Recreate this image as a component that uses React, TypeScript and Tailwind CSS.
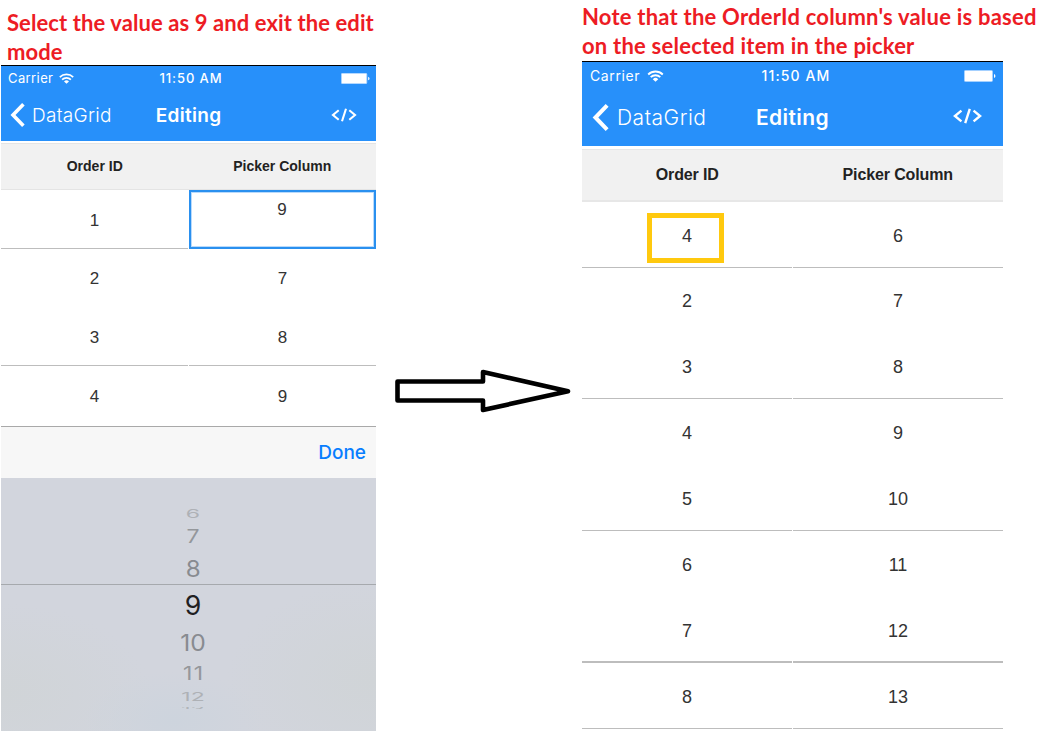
import React from "react";

const HELV = "font-['Liberation_Sans',Arial,sans-serif]";
const SANS = "font-[Inter,Roboto,sans-serif]";

function Wifi({ className }: { className: string }) {
  return (
    <svg viewBox="0 0 15 11" className={className} fill="none" stroke="white" strokeWidth="1.7">
      <path d="M0.8 4.1a9.7 9.7 0 0 1 13.4 0" />
      <path d="M3.1 6.6a6.3 6.3 0 0 1 8.800 0" />
      <path d="M7.5 10.8 5 8.4a3.6 3.6 0 0 1 5 0z" fill="white" stroke="none" />
    </svg>
  );
}

function Battery({ className }: { className: string }) {
  return (
    <svg viewBox="0 0 29 12" className={className} preserveAspectRatio="none">
      <rect x="0.4" y="0.4" width="25.4" height="11.2" rx="1" fill="white" stroke="#a9d3ff" strokeWidth="0.8" />
      <path d="M27.2 4v4q1.3-.5 1.3-2t-1.3-2z" fill="white" />
    </svg>
  );
}

function Back({ className }: { className: string }) {
  return (
    <svg viewBox="0 0 15 24" className={className} fill="none" stroke="white" strokeWidth="3.6">
      <path d="M13.400 1.3 3 12l10.400 10.7" />
    </svg>
  );
}

function Code({ className }: { className: string }) {
  return (
    <svg viewBox="0 0 27 14" className={className} fill="none" stroke="white" strokeWidth="2.1">
      <path d="M8.200 2.300 2.500 7l5.700 4.700M18.800 2.300 24.500 7l-5.700 4.700M15.500.8l-4 12.400" />
    </svg>
  );
}

function Cell({ value, line }: { value: string; line: string }) {
  return <div className={`flex h-full items-center justify-center ${line}`}>{value}</div>;
}

const leftRows = [
  { id: "2", value: "7", h: "h-[58px]", line: "pt-[2px]" },
  { id: "3", value: "8", h: "h-[59px]", line: "pt-[4px] border-b border-[#bdbdbd]" },
];

const rightRows = [
  { id: "2", value: "7", h: "h-[65px]", line: "pt-[2px]" },
  { id: "3", value: "8", h: "h-[66px]", line: "pt-[3px] border-b border-[#bdbdbd]" },
  { id: "4", value: "9", h: "h-[66px]", line: "pt-[2px]" },
  { id: "5", value: "10", h: "h-[66px]", line: "pt-[3px] border-b border-[#bdbdbd]" },
  { id: "6", value: "11", h: "h-[66px]", line: "pt-[2px]" },
  { id: "7", value: "12", h: "h-[66px]", line: "pt-[4px] border-b-2 border-[#bdbdbd]" },
  { id: "8", value: "13", h: "h-[66px]", line: "pt-[3px] border-b border-[#bdbdbd]" },
];

const wheel = [
  { n: "6", h: "h-[16px]", c: "text-[#aeb1b6]", s: "scale-y-[0.48]" },
  { n: "7", h: "h-[31px]", c: "text-[#94979b]", s: "scale-y-[0.8]" },
  { n: "8", h: "h-[32px]", c: "text-[#888b90]", s: "scale-x-[1.05]" },
  { n: "9", h: "h-[42px]", c: "text-[#1f2022]", s: "scale-[1.16]" },
  { n: "10", h: "h-[32px]", c: "text-[#888b90]", s: "scale-x-[1.07]" },
  { n: "11", h: "h-[31px]", c: "text-[#94979b]", s: "tracking-[1.5px] pl-[1.5px] scale-y-[0.8]" },
  { n: "12", h: "h-[14px]", c: "text-[#aeb1b6]", s: "scale-y-[0.48]" },
];

function LeftPhone() {
  return (
    <section className="flex h-[666px] w-[375px] flex-col border-t border-black">
      <header className={`h-[75px] bg-[#2790fa] text-white ${SANS}`}>
        <div className="grid h-[24px] grid-cols-3 items-center px-[7px] text-[13px] leading-none">
          <div className="flex items-center gap-[6px]">
            <span className="tracking-[0.4px]">Carrier</span>
            <Wifi className="h-[11px] w-[15px]" />
          </div>
          <span className="pl-[5px] text-center font-medium tracking-[0.9px] whitespace-nowrap">11:50 AM</span>
          <Battery className="-mr-[1px] h-[11px] w-[29px] justify-self-end" />
        </div>
        <div className="grid h-[50px] grid-cols-3 items-center text-[19px] leading-none">
          <div className="flex items-center gap-[7px] pl-[9px]">
            <Back className="h-[24px] w-[15px] shrink-0" />
            <span className="font-light tracking-[0.3px]">DataGrid</span>
          </div>
          <span className="text-center font-semibold tracking-[0.3px]">Editing</span>
          <Code className="mr-[18px] h-[14px] w-[28px] justify-self-end" />
        </div>
      </header>
      <div className={`mt-[2px] grid h-[47px] shrink-0 grid-cols-2 items-center border-y border-[#e4e4e4] bg-[#f1f1f1] text-center text-[14px] font-bold text-[#222] ${HELV}`}>
        <span>Order ID</span>
        <span>Picker Column</span>
      </div>
      <div className={`text-[17px] text-[#333] ${HELV}`}>
        <div className="grid h-[59px] grid-cols-[187px_187px] gap-x-px">
          <Cell value="1" line="pt-[3px] border-b border-[#bdbdbd]" />
          <div className="flex justify-center border-2 border-[#2a90ef] pt-[5px] pr-px shadow-[inset_0_0_0_1px_#b9dafb]">9</div>
        </div>
        {leftRows.map((r) => (
          <div key={r.id} className={`grid grid-cols-[187px_187px] gap-x-px pr-px ${r.h}`}>
            <Cell value={r.id} line={r.line} />
            <Cell value={r.value} line={r.line} />
          </div>
        ))}
        <div className="grid h-[61px] grid-cols-[187px_187px] gap-x-px border-b border-[#a9a9a9]">
          <Cell value="4" line="pt-px" />
          <Cell value="9" line="pt-px" />
        </div>
      </div>
      <div className={`flex h-[51px] items-center justify-end bg-[#f7f7f7] pt-[2px] pr-[10px] text-[19px] font-medium text-[#087eff] ${SANS}`}>
        Done
      </div>
      <div className="relative h-[253px] overflow-hidden bg-[radial-gradient(ellipse_90px_50px_at_46%_96%,#cdd4dd,transparent),radial-gradient(ellipse_150px_90px_at_0%_85%,#d0d4d7,transparent),radial-gradient(ellipse_150px_100px_at_100%_80%,#d0d4d7,transparent)] bg-[#d2d5dd]">
        <div className={`flex flex-col pt-[28px] pl-[9px] text-[23px] leading-none ${SANS}`}>
          {wheel.map((w) => (
            <div key={w.n} className={`flex items-center justify-center ${w.h} ${w.c}`}>
              <span className={w.s}>{w.n}</span>
            </div>
          ))}
          <div className="mt-[3px] flex h-[2px] justify-center overflow-hidden text-[#b0b4b9]">
            <span className="-mt-[1px] origin-top scale-y-[0.3]">13</span>
          </div>
        </div>
        <div className="absolute top-[106px] h-px w-full bg-[#a6a9ad]" />
      </div>
    </section>
  );
}

function RightPhone() {
  return (
    <section className="flex h-[670px] w-[421px] flex-col border-t border-black">
      <header className={`h-[84px] shrink-0 bg-[#2790fa] text-white ${SANS}`}>
        <div className="grid h-[27px] grid-cols-3 items-center pr-[8px] pl-[8px] text-[14px] leading-none">
          <div className="flex items-center gap-[7px]">
            <span className="tracking-[0.6px]">Carrier</span>
            <Wifi className="h-[12px] w-[17px]" />
          </div>
          <span className="pl-[7px] text-center font-medium tracking-[1.1px] whitespace-nowrap">11:50 AM</span>
          <Battery className="-mr-[1px] h-[12px] w-[32px] justify-self-end" />
        </div>
        <div className="grid h-[57px] grid-cols-3 items-center text-[21px] leading-none">
          <div className="flex items-center gap-[8px] pl-[10px]">
            <Back className="h-[27px] w-[17px] shrink-0" />
            <span className="font-light tracking-[0.5px]">DataGrid</span>
          </div>
          <span className="text-center font-semibold tracking-[0.4px]">Editing</span>
          <Code className="mr-[20px] mb-[3px] h-[16px] w-[31px] justify-self-end" />
        </div>
      </header>
      <div className={`mt-[3px] grid h-[53px] shrink-0 grid-cols-2 items-center border-t border-b-2 border-[#e7e7e7] bg-[#f1f1f1] text-center text-[16px] font-bold tracking-[-0.12px] text-[#222] ${HELV}`}>
        <span>Order ID</span>
        <span>Picker Column</span>
      </div>
      <div className={`text-[18px] text-[#333] ${HELV}`}>
        <div className="grid h-[66px] grid-cols-[210px_210px] gap-x-px">
          <div className="flex items-center justify-center border-b border-[#bdbdbd]">
            <div className="mt-[6px] -ml-[3px] flex h-[50px] w-[77px] items-center justify-center border-[5px] border-[#ffc90e] pb-[2px] pl-[3px]">4</div>
          </div>
          <Cell value="6" line="border-b border-[#bdbdbd] pt-[3px]" />
        </div>
        {rightRows.map((r) => (
          <div key={r.id} className={`grid grid-cols-[210px_210px] gap-x-px ${r.h}`}>
            <Cell value={r.id} line={r.line} />
            <Cell value={r.value} line={r.line} />
          </div>
        ))}
      </div>
    </section>
  );
}

export default function App() {
  return (
    <main className="flex h-[731px] w-[1043px] overflow-hidden bg-white">
      <div className="flex w-[394px] shrink-0 flex-col pl-[1px]">
        <h2 className="h-[65px] shrink-0 pt-[8px] pl-[6px] font-[Lato,sans-serif] text-[22px] leading-[29px] font-bold tracking-[0.09px] whitespace-nowrap text-[#ed1c24]">
          Select the value as 9 and exit the edit
          <br />
          mode
        </h2>
        <LeftPhone />
      </div>
      <div className="w-[188px] shrink-0 pt-[360px]">
        <svg viewBox="394 360 188 60" className="h-[60px] w-[188px]" fill="none" stroke="black" strokeWidth="4.6" strokeLinejoin="round">
          <path d="M397.5 381.5H483V372l85 19.2L483 410V400.500H397.500Z" />
        </svg>
      </div>
      <div className="flex w-[461px] shrink-0 flex-col">
        <h2 className="h-[61px] shrink-0 pt-[2px] font-[Lato,sans-serif] text-[22px] leading-[29px] font-bold tracking-[0.22px] whitespace-nowrap text-[#ed1c24]">
          Note that the OrderId column's value is based
          <br />
          on the selected item in the picker
        </h2>
        <RightPhone />
      </div>
    </main>
  );
}
